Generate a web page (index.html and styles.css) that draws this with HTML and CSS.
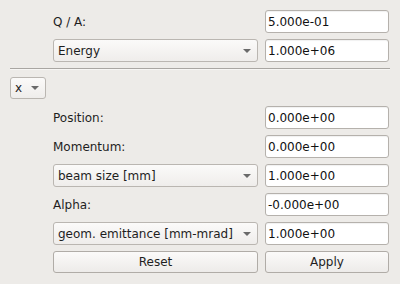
FILE: index.html
```html
<!DOCTYPE html>
<html lang="en">
<head>
  <meta charset="UTF-8">
  <title>Beam settings</title>
  <link rel="stylesheet" href="styles.css">
</head>
<body>
  <div class="form">
    <div class="label">Q / A:</div>
    <input class="field" type="text" value="5.000e-01">

    <div class="combo">Energy</div>
    <input class="field" type="text" value="1.000e+06">
  </div>

  <div class="sep"></div>

  <div class="combo axis">x</div>

  <div class="form lower">
    <div class="label">Position:</div>
    <input class="field" type="text" value="0.000e+00">

    <div class="label">Momentum:</div>
    <input class="field" type="text" value="0.000e+00">

    <div class="combo">beam size [mm]</div>
    <input class="field" type="text" value="1.000e+00">

    <div class="label">Alpha:</div>
    <input class="field" type="text" value="-0.000e+00">

    <div class="combo">geom. emittance [mm-mrad]</div>
    <input class="field" type="text" value="1.000e+00">

    <button class="btn">Reset</button>
    <button class="btn">Apply</button>
  </div>
</body>
</html>
```

FILE: styles.css
```css
body {
  margin: 0;
  background-color: #edebe8;
  font-family: "DejaVu Sans", sans-serif;
  font-size: 12px;
  color: #1e1e1e;
}

.form {
  display: grid;
  grid-template-columns: 205px 124px;
  grid-auto-rows: 23px;
  column-gap: 7px;
  row-gap: 6px;
  padding: 10px 0 0 53px;
}

.form.lower {
  padding-top: 7px;
}

.label {
  display: flex;
  align-items: center;
}

.field {
  box-sizing: border-box;
  height: 23px;
  margin: 0;
  padding: 0 2px;
  border: 1px solid #b5b1ac;
  border-radius: 3px;
  background: #fff;
  box-shadow: inset 0 1px 1px rgba(0, 0, 0, 0.06);
  font: inherit;
  color: #111;
  outline: none;
}

.combo {
  box-sizing: border-box;
  position: relative;
  display: flex;
  align-items: center;
  height: 23px;
  padding-left: 4px;
  border: 1px solid #bab6b1;
  border-radius: 3px;
  background: linear-gradient(#fbfaf9, #efedeb);
}

.combo::after {
  content: "";
  position: absolute;
  right: 6px;
  top: 50%;
  margin-top: -2px;
  border-left: 4px solid transparent;
  border-right: 4px solid transparent;
  border-top: 4px solid #6a6a6a;
}

.sep {
  margin: 6px 10px 0;
  height: 0;
  border-top: 1px solid #a9a6a2;
  border-bottom: 1px solid #f7f6f4;
}

.axis {
  width: 36px;
  height: 22px;
  margin: 7px 0 0 10px;
}

.btn {
  box-sizing: border-box;
  height: 22px;
  margin: 0;
  border: 1px solid #b0aca7;
  border-radius: 3px;
  background: linear-gradient(#fbfaf9, #edebe9);
  font: inherit;
  color: #1e1e1e;
}
```
